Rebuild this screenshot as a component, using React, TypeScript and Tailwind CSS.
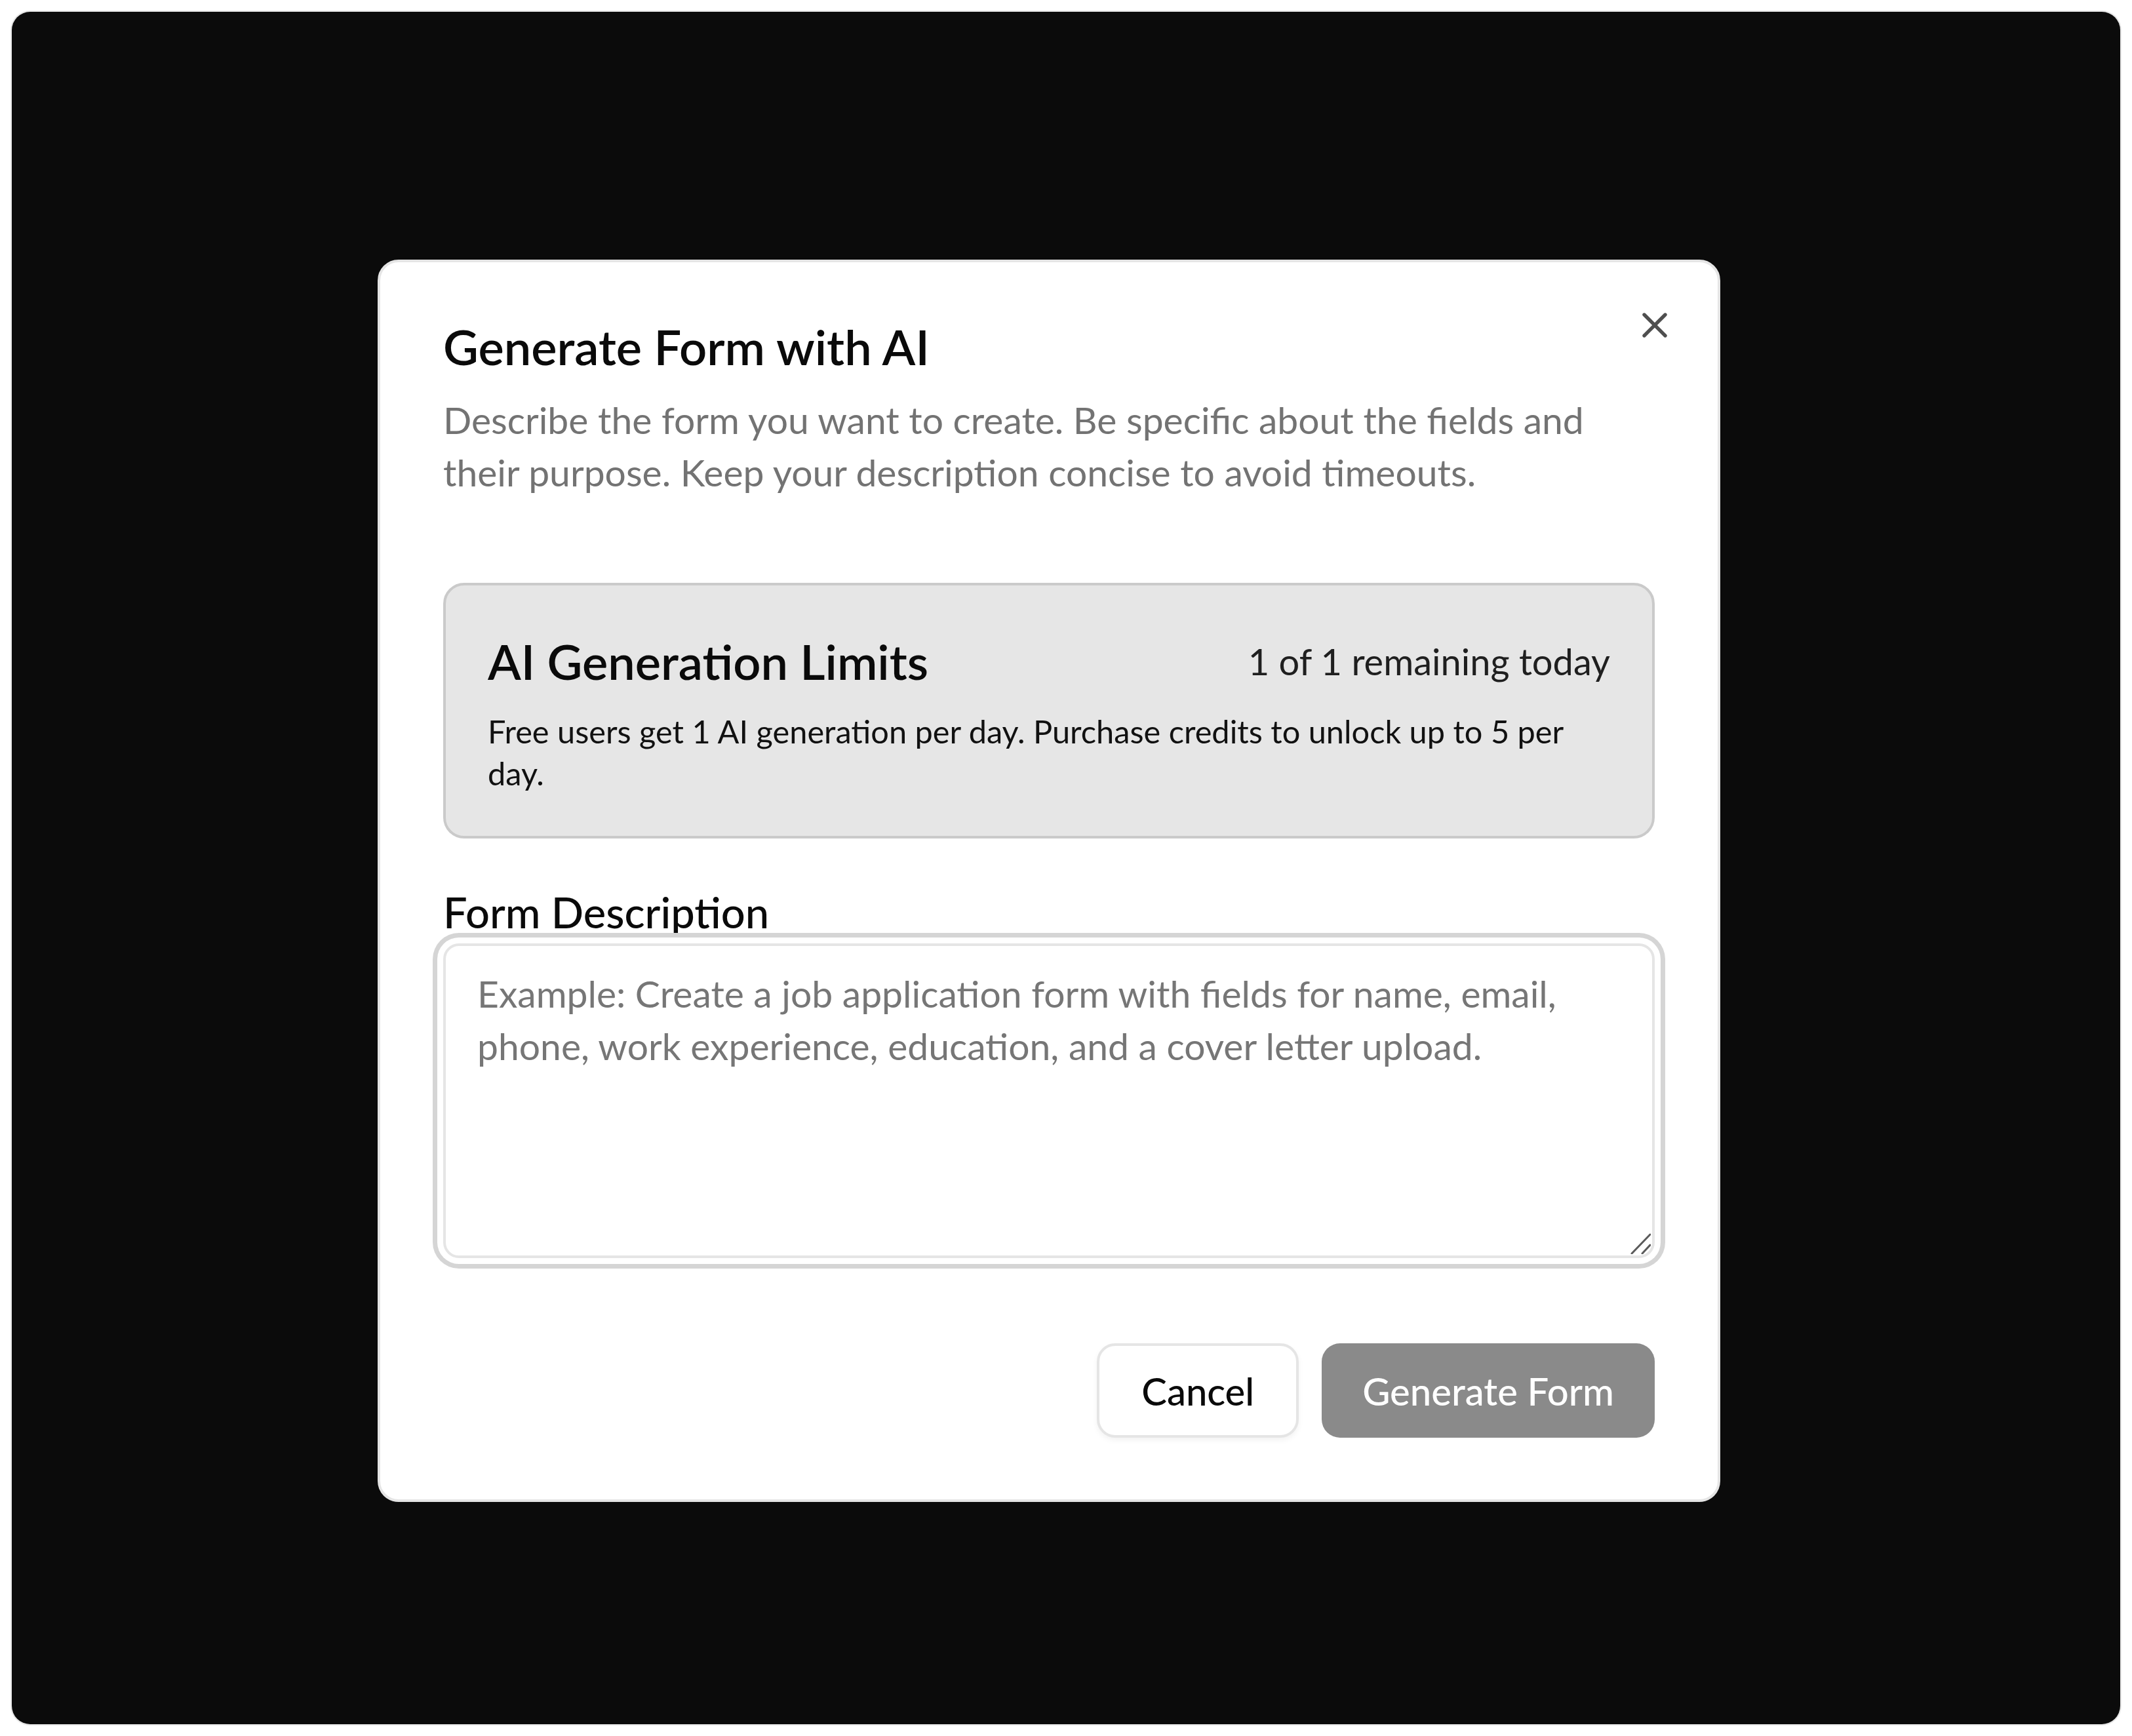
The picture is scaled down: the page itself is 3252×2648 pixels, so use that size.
import { X } from 'lucide-react';

const ResizeGrip = () => (
  <svg
    className="pointer-events-none absolute bottom-[6px] right-[6px] h-[32px] w-[32px]"
    viewBox="0 0 32 32"
    fill="none"
    stroke="#5a5a5a"
    strokeWidth={3}
    strokeLinecap="round"
  >
    <path d="M3 31 L31 2" />
    <path d="M19 31 L31 18" />
  </svg>
);

export default function App() {
  return (
    <div className="min-h-screen w-full bg-white p-[18px] [font-family:Lato,'Noto_Sans',sans-serif]">
      <div className="flex h-[2612px] w-full items-start rounded-[28px] bg-[#0b0b0b] pl-[558px] pt-[378px] shadow-[0_0_0_2px_#e6e6e6]">
        {/* dialog */}
        <div className="relative flex w-[2048px] flex-col rounded-[32px] border-4 border-[#e5e5e5] bg-white px-[96px] pb-[94px] pt-[92px]">
          <button className="absolute right-[64px] top-[64px] text-[#4f4f4f]">
            <X size={64} strokeWidth={2} />
          </button>

          <h2 className="text-[74px] font-semibold leading-[74px] text-[#0a0a0a]">Generate Form with AI</h2>
          <p className="mt-[34px] pr-[40px] text-[57px] leading-[80px] text-[#737373]">
            Describe the form you want to create. Be specific about the fields and their purpose. Keep your
            description concise to avoid timeouts.
          </p>

          <div className="mt-[129px] rounded-[32px] border-4 border-[#cacaca] bg-[#e6e6e6] p-[64px]">
            <div className="flex items-center justify-between">
              <h3 className="text-[74px] font-semibold leading-[104px] text-[#0a0a0a]">AI Generation Limits</h3>
              <span className="text-[56px] leading-[80px] text-[#1f1f1f]">1 of 1 remaining today</span>
            </div>
            <p className="mt-[22px] text-[48.7px] leading-[64px] text-[#111111]">
              Free users get 1 AI generation per day. Purchase credits to unlock up to 5 per day.
            </p>
          </div>

          <label className="mt-[64px] block text-[65px] font-medium leading-[96px] text-[#0a0a0a]">
            Form Description
          </label>
          <div className="relative">
            <textarea
              className="block h-[480px] w-full resize-none rounded-[24px] border-4 border-[#e5e5e5] bg-white px-[48px] py-[32px] text-[57px] leading-[80px] text-[#0a0a0a] shadow-[0_0_0_9px_#ffffff,0_0_0_16px_#d5d5d5] outline-none placeholder:text-[#767676]"
              placeholder="Example: Create a job application form with fields for name, email, phone, work experience, education, and a cover letter upload."
            />
            <ResizeGrip />
          </div>

          <div className="mt-[130px] flex justify-end gap-[35px]">
            <button className="h-[144px] rounded-[28px] border-4 border-[#e5e5e5] bg-white px-[64px] text-[58px] font-medium text-[#0a0a0a] shadow-[0_4px_8px_rgba(0,0,0,0.05)]">
              Cancel
            </button>
            <button
              disabled
              className="h-[144px] rounded-[28px] bg-[#8a8a8a] px-[62px] text-[58px] font-medium text-white"
            >
              Generate Form
            </button>
          </div>
        </div>
      </div>
    </div>
  );
}
